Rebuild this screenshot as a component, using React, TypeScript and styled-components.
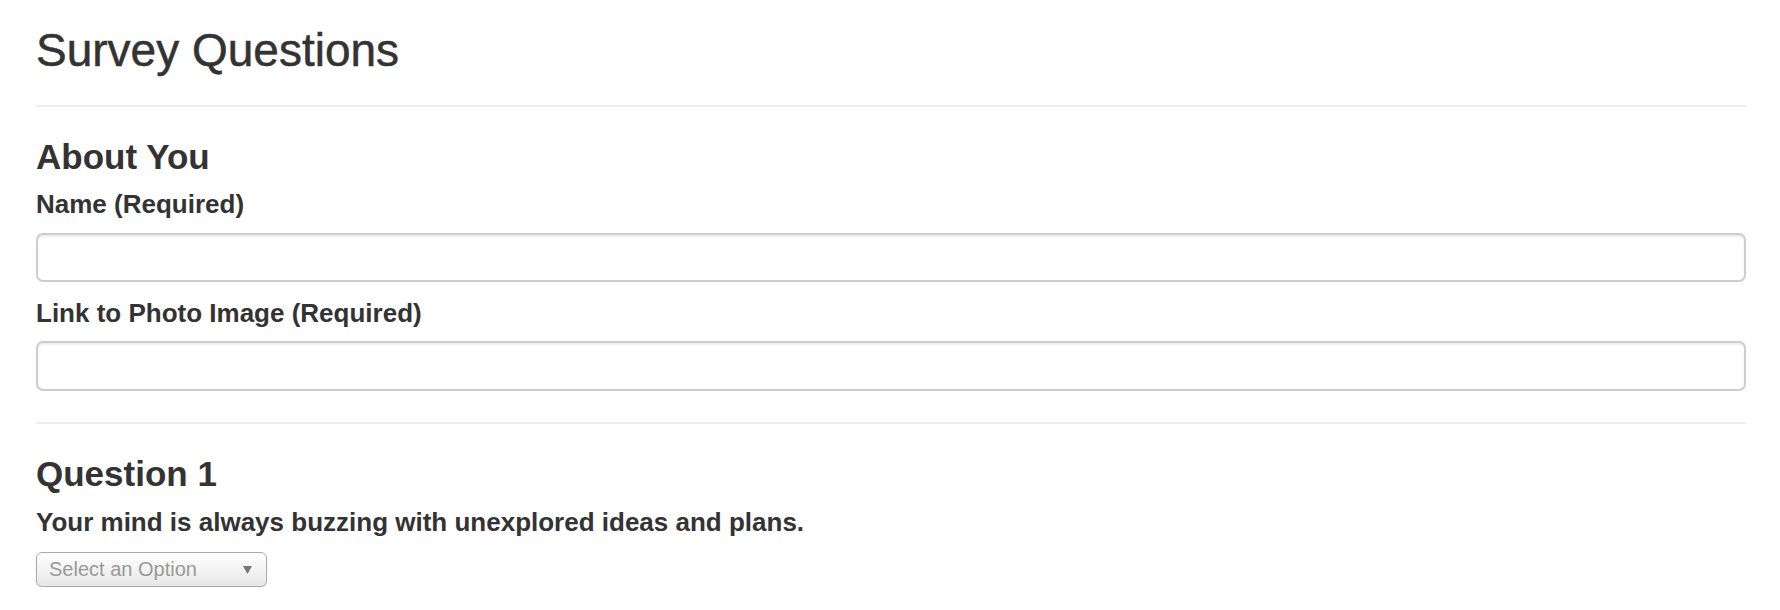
import React from 'react';
import styled, { createGlobalStyle } from 'styled-components';

const GlobalStyle = createGlobalStyle`
  html, body {
    margin: 0;
    padding: 0;
    background: #fff;
  }
  body {
    font-family: "Liberation Sans", Arial, Helvetica, sans-serif;
    color: #333;
  }
  * {
    box-sizing: border-box;
  }
`;

const Page = styled.div`
  padding: 25px 34px 0 36px;
  display: flex;
  flex-direction: column;
`;

const Title = styled.h1`
  margin: 0;
  font-size: 46px;
  font-weight: 400;
  line-height: 1.1;
  -webkit-text-stroke: 0.5px #333;
`;

const Divider = styled.hr<{ $top: number }>`
  margin: ${(p) => p.$top}px 0 0;
  border: 0;
  border-top: 2px solid #eee;
  height: 0;
`;

const Section = styled.section`
  display: flex;
  flex-direction: column;
`;

const SectionTitle = styled.h3`
  margin: 31px 0 0;
  font-size: 35px;
  font-weight: 700;
  line-height: 1.1;
`;

const Label = styled.label<{ $top: number }>`
  display: block;
  margin-top: ${(p) => p.$top}px;
  font-size: 26px;
  font-weight: 700;
  line-height: 1.4;
`;

const TextInput = styled.input<{ $top: number; $height: number }>`
  display: block;
  width: 100%;
  height: ${(p) => p.$height}px;
  margin-top: ${(p) => p.$top}px;
  padding: 0 20px;
  border: 2px solid #cdcdcd;
  border-radius: 7px;
  background: #fff;
  box-shadow: inset 0 2px 2px rgba(0, 0, 0, 0.075);
  font: inherit;
  font-size: 26px;
  outline: none;
`;

const SelectBox = styled.div`
  margin-top: 11px;
  width: 231px;
  height: 35px;
  display: flex;
  align-items: center;
  justify-content: space-between;
  padding: 0 14px 0 12px;
  border: 1.5px solid #aaa;
  border-radius: 6px;
  background: linear-gradient(#ffffff, #f1f1f1 60%, #e6e6e6);
  box-shadow: 0 1px 2px rgba(0, 0, 0, 0.12);
  color: #999;
  font-size: 20px;
  cursor: pointer;
`;

const Arrow = styled.svg`
  width: 9px;
  height: 8px;
  fill: #777;
  margin-top: 2px;
`;

const Select = ({ placeholder }: { placeholder: string }) => (
  <SelectBox role="listbox">
    <span>{placeholder}</span>
    <Arrow viewBox="0 0 9 8">
      <path d="M0 0h9L4.5 8z" />
    </Arrow>
  </SelectBox>
);

export default function App() {
  return (
    <>
      <GlobalStyle />
      <Page>
        <Title>Survey Questions</Title>
        <Divider $top={29} />
        <Section>
          <SectionTitle>About You</SectionTitle>
          <Label $top={10}>Name (Required)</Label>
          <TextInput $top={11} $height={49} />
          <Label $top={13}>Link to Photo Image (Required)</Label>
          <TextInput $top={9} $height={50} />
        </Section>
        <Divider $top={31} />
        <Section>
          <SectionTitle>Question 1</SectionTitle>
          <Label $top={11}>Your mind is always buzzing with unexplored ideas and plans.</Label>
          <Select placeholder="Select an Option" />
        </Section>
      </Page>
    </>
  );
}
